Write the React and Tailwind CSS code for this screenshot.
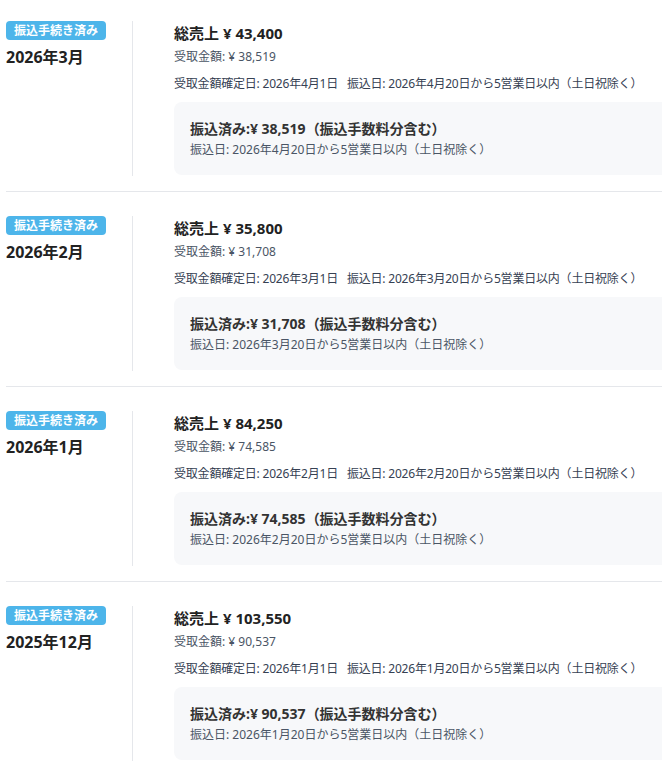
import React from 'react';

const records = [
  { month: '2026年3月', total: '43,400', received: '38,519', fixed: '2026年4月1日', transfer: '2026年4月20日' },
  { month: '2026年2月', total: '35,800', received: '31,708', fixed: '2026年3月1日', transfer: '2026年3月20日' },
  { month: '2026年1月', total: '84,250', received: '74,585', fixed: '2026年2月1日', transfer: '2026年2月20日' },
  { month: '2025年12月', total: '103,550', received: '90,537', fixed: '2026年1月1日', transfer: '2026年1月20日' },
];

function App() {
  return (
    <div
      className="min-h-screen bg-white overflow-hidden pl-[6px] -mt-[3px] text-[#222]"
      style={{ fontFamily: '"Noto Sans", "Noto Sans CJK JP", sans-serif' }}
    >
      {records.map((r, idx) => (
        <div key={idx} className="flex border-b border-gray-200 pt-6 pb-[15px] w-[900px]">
          <div className="w-[127px] shrink-0 border-r border-gray-200">
            <div className="w-fit bg-[#4db5ea] text-white text-[12px] leading-[19px] font-bold px-2 rounded">
              振込手続き済み
            </div>
            <p className="mt-[6px] text-[16px] leading-[22px] font-bold">{r.month}</p>
          </div>

          <div className="pl-[41px] h-[155px]">
            <p className="text-[15px] leading-6 font-bold">総売上 ¥ {r.total}</p>
            <p className="mt-[3px] text-[12px] leading-[18px] text-gray-600">受取金額: ¥ {r.received}</p>
            <p className="mt-[9px] text-[12px] leading-[18px] text-gray-700 tracking-[-0.2px]">
              受取金額確定日: {r.fixed}
              <span className="ml-[9px]">振込日: {r.transfer}から5営業日以内（土日祝除く）</span>
            </p>
            <div className="mt-[9px] w-[560px] bg-[#f7f8fa] rounded-lg px-4 pt-[17px] pb-[16px]">
              <p className="text-[14px] leading-5 font-bold text-[#333]">振込済み:¥ {r.received}（振込手数料分含む）</p>
              <p className="mt-[2px] text-[12px] leading-[18px] text-gray-600">振込日: {r.transfer}から5営業日以内（土日祝除く）</p>
            </div>
          </div>
        </div>
      ))}
    </div>
  );
}

export default App;
